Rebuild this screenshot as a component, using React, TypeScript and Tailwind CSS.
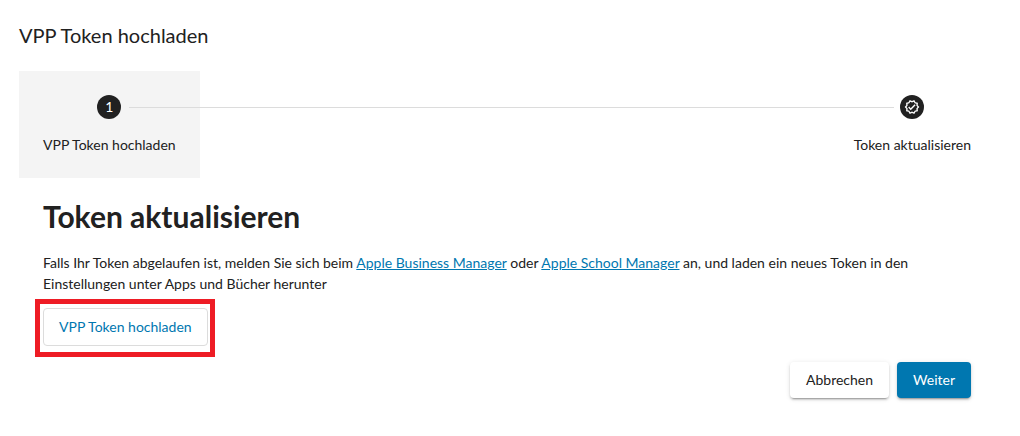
import type { ReactNode } from "react";
import { MdOutlineVerified } from "react-icons/md";
import clsx from "clsx";

type StepProps = {
  icon: ReactNode;
  label: string;
  active?: boolean;
};

function Step({ icon, label, active }: StepProps) {
  return (
    <button
      type="button"
      aria-current={active ? "step" : undefined}
      className={clsx(
        "flex shrink-0 flex-col items-center gap-4 p-6 text-sm",
        active && "bg-[#f4f4f4]",
      )}
    >
      <span className="flex size-6 items-center justify-center rounded-full bg-[#212121] text-white">
        {icon}
      </span>
      <span className="whitespace-nowrap leading-[19px]">{label}</span>
    </button>
  );
}

export default function App() {
  return (
    <main className="bg-white pt-[23px] pr-[25px] pb-8 pl-[19px] font-['Lato','Noto_Sans',sans-serif] text-[#212121]">
      <h1 className="text-xl leading-6">VPP Token hochladen</h1>

      {/* stepper header */}
      <div className="mt-6 flex items-start">
        <Step icon="1" label="VPP Token hochladen" active />
        {/* the line runs from icon to icon, over both steps' boxes */}
        <div className="z-10 mt-9 -mr-16 -ml-[71px] flex-1 border-t border-[#dcdcdc]" />
        <Step
          icon={<MdOutlineVerified className="size-4" />}
          label="Token aktualisieren"
        />
      </div>

      {/* step content */}
      <section className="px-6 pt-5">
        <h2 className="text-3xl leading-9 font-bold">Token aktualisieren</h2>
        <p className="mt-[18px] text-sm leading-[21px]">
          Falls Ihr Token abgelaufen ist, melden Sie sich beim{" "}
          <a href="#business" className="text-[#0077b0] underline">
            Apple Business Manager
          </a>{" "}
          oder{" "}
          <a href="#school" className="text-[#0077b0] underline">
            Apple School Manager
          </a>{" "}
          an, und laden ein neues Token in den Einstellungen unter Apps und
          Bücher herunter
        </p>

        {/* highlighted upload button */}
        <div className="mt-[5px] -ml-2 w-fit border-5 border-[#ee1c25] pt-1 pr-[2px] pb-[6px] pl-[3px]">
          <button
            type="button"
            className="block h-[38px] rounded border border-[#dcdcdc] px-[15px] text-sm text-[#0077b0]"
          >
            VPP Token hochladen
          </button>
        </div>

        <div className="mt-[5px] flex justify-end gap-2">
          <button
            type="button"
            className="h-9 rounded bg-white px-4 text-sm shadow-[0_3px_1px_-2px_rgba(0,0,0,0.2),0_2px_2px_0_rgba(0,0,0,0.14),0_1px_5px_0_rgba(0,0,0,0.12)]"
          >
            Abbrechen
          </button>
          <button
            type="button"
            className="h-9 rounded bg-[#0077b0] px-4 text-sm text-white shadow-[0_3px_1px_-2px_rgba(0,0,0,0.2),0_2px_2px_0_rgba(0,0,0,0.14),0_1px_5px_0_rgba(0,0,0,0.12)]"
          >
            Weiter
          </button>
        </div>
      </section>
    </main>
  );
}
